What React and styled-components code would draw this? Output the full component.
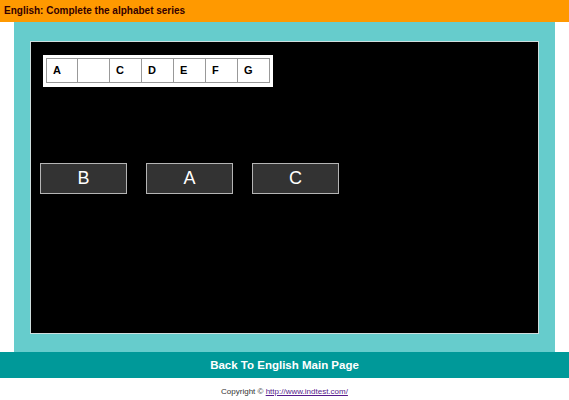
import React from 'react';
import styled, { createGlobalStyle } from 'styled-components';

const GlobalStyle = createGlobalStyle`
  body {
    margin: 0;
    background: #ffffff;
    font-family: "Liberation Sans", Arial, sans-serif;
  }
`;

const Header = styled.div`
  height: 22px;
  background: #ff9900;
  color: #330000;
  font-size: 10px;
  font-weight: bold;
  line-height: 22px;
  padding-left: 4px;
`;

const Panel = styled.div`
  margin: 0 14px;
  background: #66cccc;
  padding: 19px 16px 18px;
`;

const Board = styled.div`
  height: 278px;
  background: #000000;
  border: 1px solid #cfdede;
  padding: 13px 0 0 9px;
`;

const Series = styled.div`
  display: inline-flex;
  margin-left: 3px;
  padding: 3px 3px 4px;
  background: #ffffff;
`;

const Cell = styled.div`
  width: 32px;
  height: 25px;
  box-sizing: border-box;
  border: 1px solid #999999;
  font-size: 11px;
  font-weight: bold;
  color: #000000;
  line-height: 23px;
  padding-left: 6px;
  & + & {
    border-left: none;
  }
`;

const Choices = styled.div`
  display: flex;
  gap: 19px;
  margin-top: 76px;
`;

const Choice = styled.div`
  width: 87px;
  height: 31px;
  box-sizing: border-box;
  background: #333333;
  border: 1px solid #b5b5b5;
  color: #ffffff;
  font-size: 18px;
  line-height: 29px;
  text-align: center;
`;

const BackBar = styled.div`
  height: 26px;
  background: #009999;
  color: #ffffff;
  font-size: 11.5px;
  font-weight: bold;
  text-align: center;
  line-height: 26px;
`;

const Copyright = styled.div`
  text-align: center;
  font-size: 8px;
  color: #333333;
  padding-top: 9px;
  a {
    color: #551a8b;
  }
`;

const letters = ['A', '', 'C', 'D', 'E', 'F', 'G'];
const options = ['B', 'A', 'C'];

export default function App() {
  return (
    <>
      <GlobalStyle />
      <Header>English: Complete the alphabet series</Header>
      <Panel>
        <Board>
          <Series>
            {letters.map((l, i) => (
              <Cell key={i}>{l}</Cell>
            ))}
          </Series>
          <Choices>
            {options.map((o, i) => (
              <Choice key={i}>{o}</Choice>
            ))}
          </Choices>
        </Board>
      </Panel>
      <BackBar>Back To English Main Page</BackBar>
      <Copyright>
        Copyright © <a href="#">http://www.indtest.com/</a>
      </Copyright>
    </>
  );
}
